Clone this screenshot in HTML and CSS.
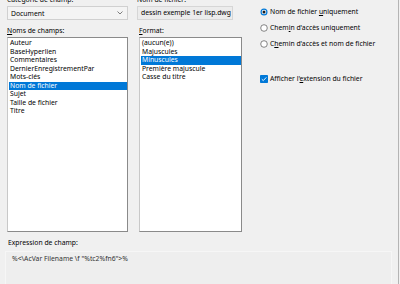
FILE: index.html
```html
<!DOCTYPE html>
<html lang="fr">
<head>
    <meta charset="UTF-8">
    <title>Champ - Nom de fichier</title>
    <link rel="stylesheet" href="styles.css">
</head>
<body>
    <div class="frame">
        <div class="fields">
            <!-- Category and field names -->
            <div class="col col-left">
                <div class="label">Catégorie de champ:</div>
                <div class="combo">
                    <span>Document</span>
                    <svg class="chevron" width="6" height="4" viewBox="0 0 6 4"><path d="M0.5 0.5 L3 3 L5.5 0.5" fill="none" stroke="#606060" stroke-width="0.8"/></svg>
                </div>
                <div class="label label-gap"><u>N</u>oms de champs:</div>
                <ul class="listbox">
                    <li>Auteur</li>
                    <li>BaseHyperlien</li>
                    <li>Commentaires</li>
                    <li>DernierEnregistrementPar</li>
                    <li>Mots-clés</li>
                    <li class="selected">Nom de fichier</li>
                    <li>Sujet</li>
                    <li>Taille de fichier</li>
                    <li>Titre</li>
                </ul>
            </div>

            <!-- Value and format -->
            <div class="col col-mid">
                <div class="label">Nom de fichier:</div>
                <div class="textfield">dessin exemple 1er lisp.dwg</div>
                <div class="label label-gap label-format"><u>F</u>ormat:</div>
                <ul class="listbox listbox-format">
                    <li>(aucun(e))</li>
                    <li>Majuscules</li>
                    <li class="selected">Minuscules</li>
                    <li>Première majuscule</li>
                    <li>Casse du titre</li>
                </ul>
            </div>

            <!-- Options -->
            <div class="col col-right">
                <div class="option">
                    <svg width="8" height="8" viewBox="0 0 8 8"><circle cx="4" cy="4" r="3.5" fill="#0078d7"/><circle cx="4" cy="4" r="2.3" fill="#fff"/><circle cx="4" cy="4" r="1.5" fill="#1b1b1b"/></svg>
                    <span>Nom de fichier <u>u</u>niquement</span>
                </div>
                <div class="option">
                    <svg width="8" height="8" viewBox="0 0 8 8"><circle cx="4" cy="4" r="3.3" fill="#fff" stroke="#555" stroke-width="0.7"/></svg>
                    <span>Chem<u>i</u>n d'accès uniquement</span>
                </div>
                <div class="option">
                    <svg width="8" height="8" viewBox="0 0 8 8"><circle cx="4" cy="4" r="3.3" fill="#fff" stroke="#555" stroke-width="0.7"/></svg>
                    <span>C<u>h</u>emin d'accès et nom de fichier</span>
                </div>
                <div class="option option-check">
                    <svg width="8" height="8" viewBox="0 0 8 8"><rect x="0" y="0" width="8" height="8" rx="0.8" fill="#0078d7"/><path d="M1.8 4.2 L3.3 5.6 L6.3 2.4" fill="none" stroke="#fff" stroke-width="0.9"/></svg>
                    <span>Afficher l'<u>e</u>xtension du fichier</span>
                </div>
            </div>
        </div>

        <!-- Resulting expression -->
        <div class="label expr-label">Expression de champ:</div>
        <div class="expression">%&lt;\AcVar Filename \f "%tc2%fn6"&gt;%</div>
    </div>
</body>
</html>
```

FILE: styles.css
```css
body {
    margin: 0;
    padding: 0;
    background-color: #f0f0f0;
    font-family: "Noto Sans", "Open Sans", sans-serif;
    font-size: 6.8px;
    color: #000;
    overflow: hidden;
}

.frame {
    width: 398px;
    height: 284px;
    border-right: 1px solid #b4b4b4;
    overflow: hidden;
}

.fields {
    display: flex;
    margin-top: -5px;
    padding-left: 7px;
}

.col {
    display: flex;
    flex-direction: column;
}

.col-left {
    width: 121px;
}

.col-mid {
    width: 105px;
    margin-left: 9px;
}

.col-right {
    margin-left: 18px;
    padding-top: 12px;
}

.label {
    height: 9px;
    line-height: 9px;
    white-space: nowrap;
}

.label-gap {
    margin-top: 6px;
    margin-bottom: 2px;
}

.label-format {
    margin-left: 2px;
}

.combo {
    height: 14px;
    margin-top: 2px;
    box-sizing: border-box;
    border: 1px solid #d0d0d0;
    background: #f4f4f4;
    display: flex;
    align-items: center;
    justify-content: space-between;
    padding: 0 4px 0 3px;
}

.textfield {
    height: 14px;
    width: 96px;
    margin-top: 2px;
    box-sizing: border-box;
    border: 1px solid #d6d6d6;
    background: #ececec;
    line-height: 12px;
    padding-left: 3px;
    white-space: nowrap;
}

.listbox {
    list-style: none;
    margin: 0;
    padding: 1px 0 0 1px;
    height: 195px;
    box-sizing: border-box;
    border: 1px solid #8a8a8a;
    border-left-color: #c8c8c8;
    background: #fff;
}

.listbox-format {
    margin-left: 2px;
    width: 103px;
}

.listbox li {
    height: 8.5px;
    line-height: 8.5px;
    padding-left: 1px;
    white-space: nowrap;
}

.listbox li.selected {
    background: #0078d7;
    color: #fff;
}

.option {
    display: flex;
    align-items: center;
    gap: 2px;
    height: 9px;
    margin-bottom: 7px;
    white-space: nowrap;
}

.option svg {
    flex: none;
}

.option-check {
    margin-top: 19px;
}

.expr-label {
    margin: 6px 0 0 8px;
}

.expression {
    margin: 4px 0 0 5px;
    width: 387px;
    height: 40px;
    box-sizing: border-box;
    border: 1px solid #f6f6f6;
    background: #eeeeee;
    padding: 2px 0 0 6px;
    line-height: 9px;
    color: #333;
}
```
